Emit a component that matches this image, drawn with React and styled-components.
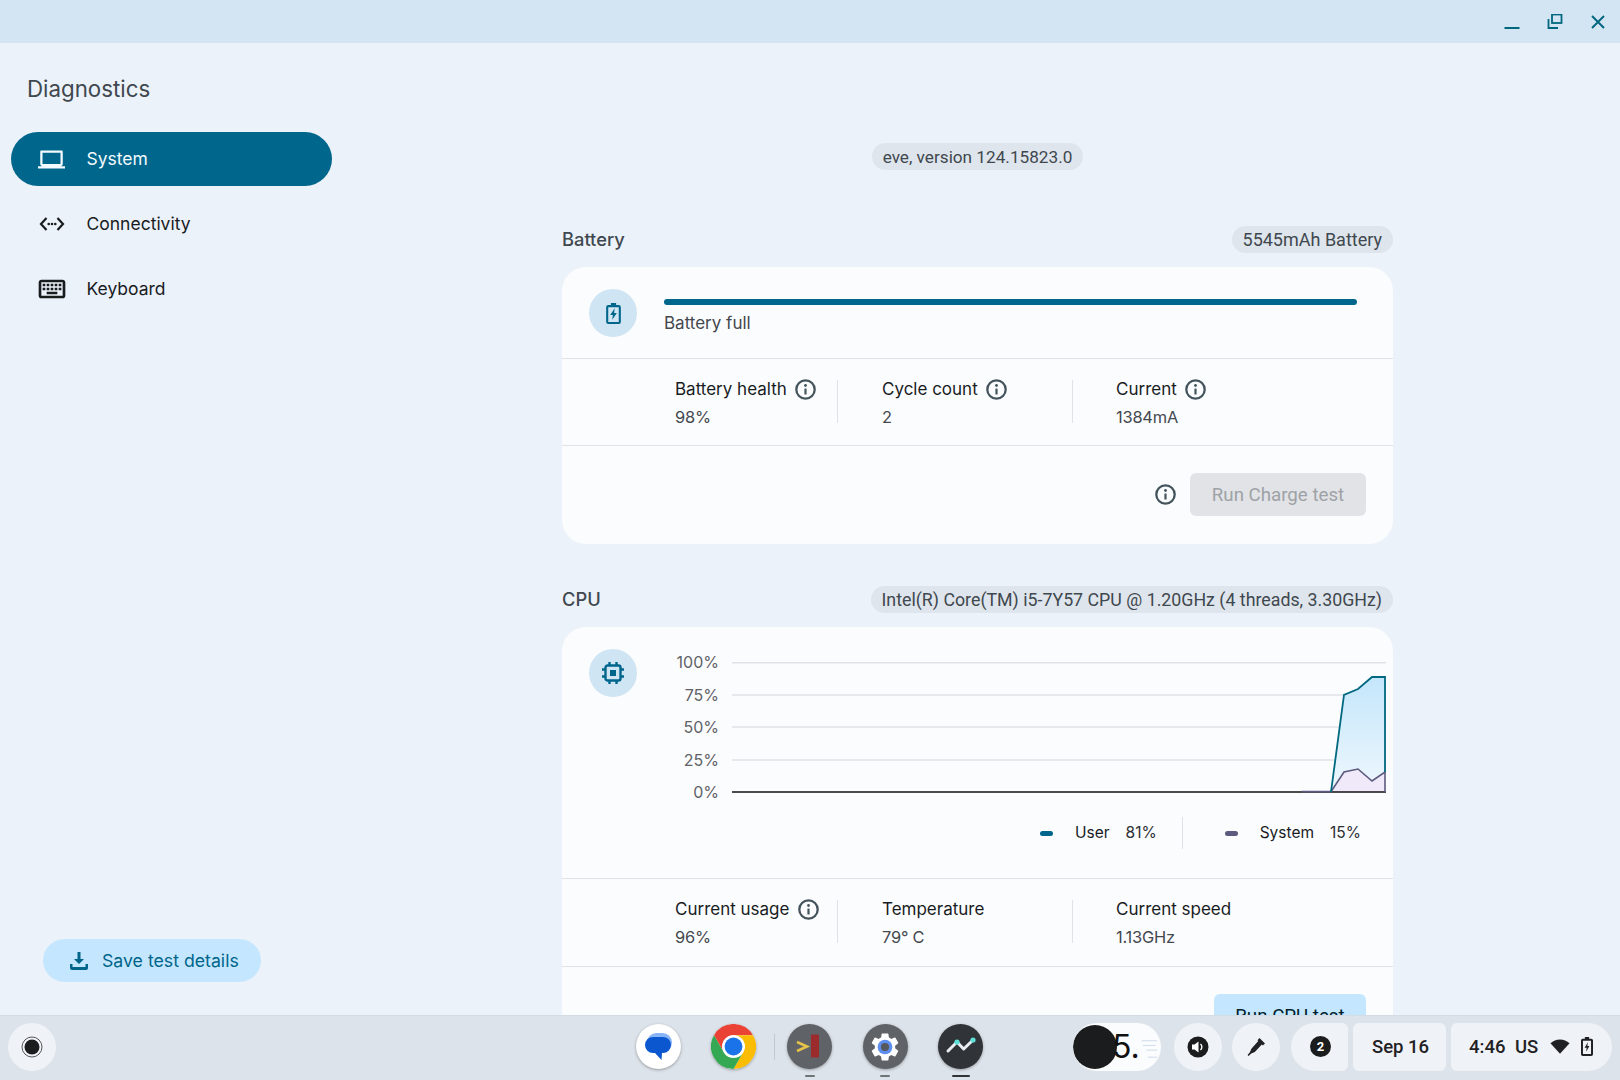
import React from "react";
import styled, { createGlobalStyle } from "styled-components";

const Global = createGlobalStyle`
  html, body { margin: 0; padding: 0; background: #ecf2f9; }
  * { box-sizing: border-box; }
  body { font-family: Inter, "Noto Sans", sans-serif; }
`;

const Page = styled.div`
  width: 1620px; height: 1080px; display: flex; flex-direction: column; overflow: hidden; background: #ecf2f9;
`;
const TitleBar = styled.header`
  height: 43px; flex: none; background: #d3e4f3; display: flex; justify-content: flex-end; align-items: center; padding-right: 0; color: #00677f;
`;
const WinButton = styled.button`
  width: 43.4px; height: 43px; margin: 0; padding: 0; border: 0; background: none; color: inherit; display: flex; align-items: center; justify-content: center;
`;
const Body = styled.div`
  flex: 1; min-height: 0; display: flex;
`;
const Sidebar = styled.aside`
  width: 350px; flex: none; display: flex; flex-direction: column; padding: 32px 0 33px 11px;
`;
const AppTitle = styled.h1`
  margin: 0 0 29px 16px; font: 400 22.3px/28px Inter, sans-serif; color: #3f484f; letter-spacing: 0;
`;
const Nav = styled.nav`
  display: flex; flex-direction: column; gap: 11px;
`;
const NavItem = styled.a`
  width: 321px; height: 54px; border-radius: 27px; display: flex; align-items: center; gap: 16.5px; padding-left: 22px;
  font: 400 17.5px/24px Inter, sans-serif; background: ${p => (p.$active ? "#00668c" : "transparent")}; color: ${p => (p.$active ? "#f3fbff" : "#191c1f")};
`;
const NavIcon = styled.span`
  width: 37px; height: 32px; display: flex; align-items: center; justify-content: center;
`;
const SaveButton = styled.button`
  margin: auto 0 0 32px; width: 218px; height: 43px; border: 0; border-radius: 22px; background: #c4e7ff; color: #00658a;
  display: flex; align-items: center; gap: 14px; padding: 0 0 0 27px; font: 400 17.7px/24px Inter, sans-serif;
`;
const Main = styled.main`
  flex: 1; min-width: 0; padding: 100px 0 0 212px; overflow: hidden;
`;
const Column = styled.div`
  width: 831px; display: flex; flex-direction: column;
`;
const Chip = styled.span`
  height: 27px; display: inline-flex; align-items: center; padding: 0 11px; border-radius: 14px; background: #dfe5ec; color: #40484f;
  font: 400 ${p => p.$size ?? 18}px/24px Roboto, sans-serif; white-space: nowrap;
`;
const VersionRow = styled.div`
  display: flex; justify-content: center; margin-bottom: 56px;
`;
const SectionHead = styled.div`
  display: flex; justify-content: space-between; align-items: center; margin-bottom: 14px;
`;
const SectionTitle = styled.h2`
  margin: -1px 0 0; font: 500 18.3px/24px Inter, sans-serif; color: #3f484f;
`;
const Section = styled.section`
  margin-bottom: 42px;
`;
const Card = styled.div`
  background: #fbfcfe; border-radius: 24px; overflow: hidden;
`;
const TopRow = styled.div`
  height: 92px; display: flex; gap: 27px; padding: 22px 36px 0 27px; border-bottom: 1px solid #dfe2e6;
`;
const Badge = styled.div`
  width: 48px; height: 48px; flex: none; border-radius: 50%; background: #cfe5f3; color: #00668c; display: flex; align-items: center; justify-content: center;
`;
const Meter = styled.div`
  flex: 1; padding-top: 10px;
`;
const MeterTrack = styled.div`
  height: 6px; border-radius: 3px; background: #00668c;
`;
const MeterLabel = styled.div`
  margin-top: 6px; font: 400 17px/24px Inter, sans-serif; color: #44484e;
`;
const StatsRow = styled.div`
  height: ${p => p.$h}px; display: flex; padding: ${p => p.$top}px 0 0 113px; border-bottom: 1px solid #dfe2e6;
`;
const Stat = styled.div`
  width: ${p => p.$w}px; height: 43px; padding-left: ${p => p.$pad}px; border-right: ${p => (p.$last ? "0" : "1px solid #dfe2e6")};
`;
const StatLabel = styled.div`
  display: flex; align-items: center; gap: 8.5px; height: 20px; margin-top: -1px; font: 400 17px/20px Inter, sans-serif; color: #191c1f; white-space: nowrap;
`;
const StatValue = styled.div`
  margin-top: 7.5px; font: 400 16.4px/20px Inter, sans-serif; color: #44484e; letter-spacing: -0.2px; white-space: nowrap;
`;
const Actions = styled.div`
  display: flex; justify-content: flex-end; align-items: center; gap: 14px; padding: 27px 27px 28px 0;
`;
const ActionButton = styled.button`
  height: 43px; width: ${p => p.$w}px; border: 0; border-radius: 6px; padding: 0; background: ${p => (p.$disabled ? "#e1e3e6" : "#c4e7ff")};
  color: ${p => (p.$disabled ? "#9ea2a6" : "#001e2c")}; font: 400 18.7px/24px Roboto, sans-serif;
`;
const ChartRow = styled.div`
  height: 252px; display: flex; gap: 27px; padding: 22px 0 0 27px; border-bottom: 1px solid #dfe2e6;
`;
const ChartArea = styled.div`
  flex: 1; min-width: 0; padding-top: 1px;
`;
const ChartSvg = styled.svg`
  display: block; width: 728px; height: 150px;
`;
const Legend = styled.div`
  height: 32px; margin-top: 17px; padding-right: 32px; display: flex; justify-content: flex-end; align-items: center; font: 400 15.5px/20px Inter, sans-serif; color: #191c1f;
`;
const LegendItem = styled.div`
  display: flex; align-items: center; height: 32px;
`;
const LegendDash = styled.i`
  width: 13px; height: 5px; border-radius: 3px; background: ${p => p.$c}; margin-right: 22px;
`;
const LegendValue = styled.span`
  margin-left: 16px; color: #2c3035;
`;
const LegendRule = styled.div`
  width: 1px; height: 32px; background: #dfe2e6; margin: 0 42px 0 25px;
`;
const Taskbar = styled.footer`
  height: 65px; flex: none; position: relative; z-index: 1; background: #dde3ea; border-top: 1px solid #d5dbe2; display: flex; align-items: center; padding: 0 8px 3px;
`;
const RoundTray = styled.div`
  width: 48px; height: 48px; flex: none; border-radius: 50%; background: #eff3f7; display: flex; align-items: center; justify-content: center;
`;
const Apps = styled.div`
  margin-left: 579.5px; display: flex; align-items: center;
`;
const AppIcon = styled.div`
  width: 45px; height: 45px; margin-right: ${p => p.$gap ?? 30.5}px; position: relative; border-radius: 50%; box-shadow: 0 1px 3px rgba(60,64,67,.45);
  background: ${p => p.$bg};
  display: flex; align-items: center; justify-content: center;
  &::after {
    content: ""; display: ${p => (p.$dot ? "block" : "none")}; position: absolute; left: 50%; bottom: -8px; transform: translateX(-50%);
    width: ${p => p.$dot}px; height: 2px; border-radius: 1px; background: ${p => (p.$dot > 10 ? "#303338" : "#6f7478")};
  }
`;
const ShelfRule = styled.div`
  width: 1px; height: 26px; background: #c4c9cf; margin: 0 12.5px 0 -13px;
`;
const Status = styled.div`
  margin-left: auto; display: flex; align-items: center;
`;
const Holding = styled.div`
  width: 88px; height: 48px; border-radius: 24px; background: #fbfcfe; overflow: hidden; display: flex; align-items: center; margin-right: 13px;
`;
const HoldingDot = styled.div`
  width: 44px; height: 44px; flex: none; border-radius: 50%; background: #1b1c1e;
`;
const HoldingText = styled.span`
  font: 400 32px/40px Inter, sans-serif; color: #111; margin-left: -5px; position: relative;
`;
const StatusRound = styled(RoundTray)`
  margin-right: ${p => p.$gap}px;
`;
const Pod = styled.div`
  height: 48px; width: ${p => p.$w}px; margin-right: ${p => p.$gap ?? 0}px; background: #eff3f7; display: flex; align-items: center;
  padding-left: ${p => p.$pad ?? 0}px; border-radius: ${p => p.$radius}; font: 500 18.5px/24px Roboto, sans-serif; color: #1f2124; white-space: nowrap;
`;
const NotifBadge = styled.span`
  width: 21px; height: 21px; margin-left: 19px; border-radius: 50%; background: #1b1c1e; color: #fff; display: flex; align-items: center; justify-content: center; font: 700 13px/1 Roboto, sans-serif;
`;
const Locale = styled.span`
  margin-left: 9.5px; margin-right: 12px;
`;

const Info = () => (
  <svg width="21" height="21" viewBox="0 0 21 21" fill="none" style={{ flex: "none" }}>
    <circle cx="10.5" cy="10.5" r="9.2" stroke="#44545c" strokeWidth="2.3" />
    <circle cx="10.5" cy="6.5" r="1.4" fill="#44545c" />
    <rect x="9.4" y="9.4" width="2.2" height="6" rx=".5" fill="#44545c" />
  </svg>
);

const Stats = ({ top, h, items }) => (
  <StatsRow $top={top} $h={h}>
    {items.map((s, i) => (
      <Stat key={s.label} $w={[163, 235, 200][i]} $pad={[0, 44, 43][i]} $last={i === 2}>
        <StatLabel>{s.label}{s.info && <Info />}</StatLabel>
        <StatValue>{s.value}</StatValue>
      </Stat>
    ))}
  </StatsRow>
);

const gridYs = [
  ["100%", 12.7], ["75%", 45], ["50%", 77], ["25%", 110],
];

const Chart = () => (
  <ChartSvg viewBox="0 0 728 150">
    <defs>
      <linearGradient id="u" x1="0" y1="0" x2="0" y2="1">
        <stop offset="0" stopColor="#c4e6fb" />
        <stop offset="1" stopColor="#eef7fd" />
      </linearGradient>
    </defs>
    <g transform="translate(-1 0)">
      {gridYs.map(([l, y]) => (
        <g key={l}>
          <line x1="69" x2="723" y1={y} y2={y} stroke="#dfe2e6" strokeWidth="1.5" />
          <text x="56" y={y + 5.5} textAnchor="end" fontFamily="Inter, sans-serif" fontSize="16" fill="#5f6368">{l}</text>
        </g>
      ))}
      <text x="56" y="147.5" textAnchor="end" fontFamily="Inter, sans-serif" fontSize="16" fill="#5f6368">0%</text>
      <path d="M668 142L681 45L695 39L709 27H722V142Z" fill="url(#u)" />
      <path d="M668 142L681 122L695 119L709 131L722 122V142Z" fill="#efe9f9" />
      <line x1="69" x2="723" y1="142" y2="142" stroke="#111" strokeWidth="1.5" />
      <path d="M639 141.6H668L681 122L695 119L709 131L722 122V142" fill="none" stroke="#5c5a7e" strokeWidth="1.6" />
      <path d="M668 142L681 45L695 39L709 27H722V122" fill="none" stroke="#00687f" strokeWidth="1.8" />
    </g>
  </ChartSvg>
);

const Chrome = () => (
  <svg width="45" height="45" viewBox="0 0 48 48">
    <path d="M3.2 12A24 24 0 0 1 44.8 12H24A12 12 0 0 0 13.6 30Z" fill="#ea4335" />
    <path d="M44.8 12A24 24 0 0 1 24 48L34.4 30A12 12 0 0 0 24 12Z" fill="#fbbc04" />
    <path d="M24 48A24 24 0 0 1 3.2 12L13.6 30A12 12 0 0 0 34.4 30Z" fill="#34a853" />
    <circle cx="24" cy="24" r="12" fill="#fff" />
    <circle cx="24" cy="24" r="9.5" fill="#1a73e8" />
  </svg>
);

const Messages = () => (
  <svg width="45" height="45" viewBox="0 0 45 45">
    <rect x="11" y="9" width="25" height="19" rx="9.5" fill="#8ab4f8" />
    <path d="M17 13h10a8 8 0 0 1 0 16h-1l-.5 7-6.5-7h-2a8 8 0 0 1 0-16Z" fill="#0b57d0" />
  </svg>
);

const gear = "M19.14 12.94c.04-.3.06-.61.06-.94 0-.32-.02-.64-.07-.94l2.03-1.58c.18-.14.23-.41.12-.61l-1.92-3.32c-.12-.22-.37-.29-.59-.22l-2.39.96c-.5-.38-1.03-.7-1.62-.94l-.36-2.54c-.04-.24-.24-.41-.48-.41h-3.84c-.24 0-.43.17-.47.41l-.36 2.54c-.59.24-1.13.57-1.62.94l-2.39-.96c-.22-.08-.47 0-.59.22L2.74 8.87c-.12.21-.08.47.12.61l2.03 1.58c-.05.3-.09.63-.09.94s.02.64.07.94l-2.03 1.58c-.18.14-.23.41-.12.61l1.92 3.32c.12.22.37.29.59.22l2.39-.96c.5.38 1.03.7 1.62.94l.36 2.54c.05.24.24.41.48.41h3.84c.24 0 .44-.17.47-.41l.36-2.54c.59-.24 1.13-.56 1.62-.94l2.39.96c.22.08.47 0 .59-.22l1.92-3.32c.12-.22.07-.47-.12-.61l-2.01-1.58z";

export default function App() {
  return (
    <Page>
      <Global />
      <TitleBar>
        <WinButton aria-label="Minimize">
          <svg width="16" height="16" viewBox="0 0 16 16"><rect x="0.5" y="13" width="15" height="2" fill="currentColor" /></svg>
        </WinButton>
        <WinButton aria-label="Restore">
          <svg width="16" height="16" viewBox="0 0 16 16" fill="none" stroke="currentColor" strokeWidth="1.8"><rect x="5" y="0.5" width="9.5" height="8.5" /><path d="M1.5 5V14H11" /></svg>
        </WinButton>
        <WinButton aria-label="Close">
          <svg width="16" height="16" viewBox="0 0 16 16" fill="none" stroke="currentColor" strokeWidth="2"><path d="M2 2L14 14M14 2L2 14" /></svg>
        </WinButton>
      </TitleBar>
      <Body>
        <Sidebar>
          <AppTitle>Diagnostics</AppTitle>
          <Nav>
            <NavItem $active>
              <NavIcon>
                <svg width="27" height="27" viewBox="0 0 24 24" fill="currentColor"><path d="M20 18c1.1 0 2-.9 2-2V5c0-.6-.4-1-1-1H3c-.6 0-1 .4-1 1v11c0 1.1.9 2 2 2H0v2h24v-2h-4zM4 6h16v10H4V6z" /></svg>
              </NavIcon>
              System
            </NavItem>
            <NavItem>
              <NavIcon>
                <svg width="26" height="16" viewBox="0 0 26 16" fill="none" stroke="currentColor" strokeWidth="2.2"><path d="M7.5 2L2 8l5.5 6M18.5 2L24 8l-5.5 6" /><g fill="currentColor" stroke="none"><circle cx="9.7" cy="8" r="1.3" /><circle cx="13" cy="8" r="1.3" /><circle cx="16.3" cy="8" r="1.3" /></g></svg>
              </NavIcon>
              Connectivity
            </NavItem>
            <NavItem>
              <NavIcon>
                <svg width="32" height="32" viewBox="0 0 24 24" fill="currentColor"><path d="M20 7v10H4V7h16m0-2H4c-1.1 0-1.99.9-1.99 2L2 17c0 1.1.9 2 2 2h16c1.1 0 2-.9 2-2V7c0-1.1-.9-2-2-2zm-9 3h2v2h-2zm0 3h2v2h-2zM8 8h2v2H8zm0 3h2v2H8zm-3 0h2v2H5zm0-3h2v2H5zm3 6h8v2H8zm6-3h2v2h-2zm0-3h2v2h-2zm3 3h2v2h-2zm0-3h2v2h-2z" /></svg>
              </NavIcon>
              Keyboard
            </NavItem>
          </Nav>
          <SaveButton>
            <svg width="18" height="18" viewBox="0 0 18 18" fill="currentColor"><path d="M7.5 0h3v7h3.5L9 12 4 7h3.5zM0 12h2.5v3h13v-3H18v4a2 2 0 0 1-2 2H2a2 2 0 0 1-2-2z" /></svg>
            Save test details
          </SaveButton>
        </Sidebar>
        <Main>
          <Column>
            <VersionRow><Chip $size={17.2}>eve, version 124.15823.0</Chip></VersionRow>
            <Section>
              <SectionHead>
                <SectionTitle>Battery</SectionTitle>
                <Chip>5545mAh Battery</Chip>
              </SectionHead>
              <Card>
                <TopRow>
                  <Badge>
                    <svg width="15" height="21" viewBox="0 0 14 20"><path d="M4.5 0h5v2H12a2 2 0 0 1 2 2v14a2 2 0 0 1-2 2H2a2 2 0 0 1-2-2V4a2 2 0 0 1 2-2h2.5zM2 4v14h10V4z" fill="currentColor" /><path d="M8.2 5L3.8 11.5H6.4L5.8 16L10.2 9.5H7.6Z" fill="currentColor" /></svg>
                  </Badge>
                  <Meter>
                    <MeterTrack />
                    <MeterLabel>Battery full</MeterLabel>
                  </Meter>
                </TopRow>
                <Stats top={21} h={87} items={[
                  { label: "Battery health", value: "98%", info: true },
                  { label: "Cycle count", value: "2", info: true },
                  { label: "Current", value: "1384mA", info: true },
                ]} />
                <Actions>
                  <Info />
                  <ActionButton $w={176} $disabled>Run Charge test</ActionButton>
                </Actions>
              </Card>
            </Section>
            <Section>
              <SectionHead>
                <SectionTitle>CPU</SectionTitle>
                <Chip $size={17.8}>Intel(R) Core(TM) i5-7Y57 CPU @ 1.20GHz (4 threads, 3.30GHz)</Chip>
              </SectionHead>
              <Card>
                <ChartRow>
                  <Badge>
                    <svg width="24" height="24" viewBox="0 0 24 24" fill="none"><rect x="4.5" y="4.5" width="15" height="15" rx="2" stroke="currentColor" strokeWidth="2.4" /><rect x="9" y="9" width="6" height="6" fill="currentColor" /><path d="M8.5 1v3M15.5 1v3M8.5 20v3M15.5 20v3M1 8.5h3M1 15.5h3M20 8.5h3M20 15.5h3" stroke="currentColor" strokeWidth="2.4" /></svg>
                  </Badge>
                  <ChartArea>
                    <Chart />
                    <Legend>
                      <LegendItem>
                        <LegendDash $c="#00668c" />User<LegendValue>81%</LegendValue>
                      </LegendItem>
                      <LegendRule />
                      <LegendItem>
                        <LegendDash $c="#5c5a7e" />System<LegendValue>15%</LegendValue>
                      </LegendItem>
                    </Legend>
                  </ChartArea>
                </ChartRow>
                <Stats top={21} h={88} items={[
                  { label: "Current usage", value: "96%", info: true },
                  { label: "Temperature", value: "79° C" },
                  { label: "Current speed", value: "1.13GHz" },
                ]} />
                <Actions>
                  <ActionButton $w={152}>Run CPU test</ActionButton>
                </Actions>
              </Card>
            </Section>
          </Column>
        </Main>
      </Body>
      <Taskbar>
        <RoundTray>
          <svg width="22" height="22" viewBox="0 0 22 22" fill="none"><circle cx="11" cy="11" r="10" stroke="#555" strokeWidth="1" /><circle cx="11" cy="11" r="7.5" fill="#1b1c1e" /></svg>
        </RoundTray>
        <Apps>
          <AppIcon $bg="#fff"><Messages /></AppIcon>
          <AppIcon $bg="#fff"><Chrome /></AppIcon>
          <ShelfRule />
          <AppIcon $bg="#5f6266" $dot={10}>
            <svg width="45" height="45" viewBox="0 0 45 45"><path d="M10 18L20 22.5L10 27" fill="none" stroke="#e5c34a" strokeWidth="2.6" /><rect x="24" y="10.5" width="8" height="23" fill="#9c2b2e" /></svg>
          </AppIcon>
          <AppIcon $bg="#5f6266" $dot={10}>
            <svg width="34" height="34" viewBox="0 0 24 24"><path d={gear} fill="#fff" /><circle cx="12" cy="12" r="5.2" fill="#5f8fee" /><circle cx="12" cy="12" r="2.9" fill="#55585c" /></svg>
          </AppIcon>
          <AppIcon $bg="#303338" $gap={0} $dot={18}>
            <svg width="45" height="45" viewBox="0 0 45 45" fill="none"><path d="M10 27L19 18L25.7 25L35 16" stroke="#e8eef2" strokeWidth="3" strokeLinejoin="round" strokeLinecap="round" /><circle cx="19" cy="18" r="2.6" fill="#5fe0d8" /><circle cx="35" cy="16" r="2.6" fill="#5fe0d8" /></svg>
          </AppIcon>
        </Apps>
        <Status>
          <Holding>
            <HoldingDot />
            <HoldingText>5.</HoldingText>
            <svg width="27" height="40" viewBox="0 0 27 40"><g stroke="#c3d4e6" strokeWidth="1"><path d="M2 12h20M4 18h16M8 24h14M10 33h12" /></g></svg>
          </Holding>
          <StatusRound $gap={10}>
            <svg width="22" height="22" viewBox="0 0 22 22"><circle cx="11" cy="11" r="10.5" fill="#1b1c1e" /><path d="M5 8.5h2.5L11.5 5.5v11L7.5 13.5H5z" fill="#fff" /><path d="M13.5 8a4 4 0 0 1 0 6" fill="none" stroke="#fff" strokeWidth="1.4" /></svg>
          </StatusRound>
          <StatusRound $gap={11}>
            <svg width="22" height="22" viewBox="0 0 22 22" fill="#1f2124"><path d="M14.5 2l5.5 5.5-2.2 2-1-1L9.8 16l-3.6 1.6L3.6 20l-1-.9 2.3-2.8L6.4 12.7l6.9-7.6-.8-.9z" /></svg>
          </StatusRound>
          <Pod $w={57} $gap={5} $radius="24px 6px 6px 24px"><NotifBadge>2</NotifBadge></Pod>
          <Pod $w={93} $gap={5} $pad={19} $radius="6px">Sep 16</Pod>
          <Pod $w={161} $pad={18} $radius="6px 24px 24px 6px">
            4:46<Locale>US</Locale>
            <svg width="20" height="17" viewBox="0 0 22 18" fill="#1f2124"><path d="M11 17L0.5 5.5C3.5 2.8 7 1.2 11 1.2s7.5 1.6 10.5 4.3z" /></svg>
            <svg width="12" height="21" viewBox="0 0 14 22" style={{ marginLeft: 11 }}><path d="M4.5 0h5v2H12a2 2 0 0 1 2 2v16a2 2 0 0 1-2 2H2a2 2 0 0 1-2-2V4a2 2 0 0 1 2-2h2.5zM2.3 4.3v15.4h9.4V4.3z" fill="#1f2124" /><path d="M8 6L4.2 12.5H6.6L6 17L9.8 10.5H7.4Z" fill="#1f2124" /></svg>
          </Pod>
        </Status>
      </Taskbar>
    </Page>
  );
}
